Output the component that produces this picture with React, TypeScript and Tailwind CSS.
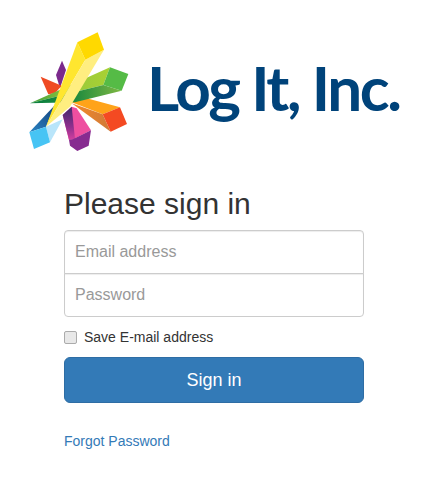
function Logo() {
  return (
    <svg width="120" height="130" viewBox="0 0 360 390" className="shrink-0" aria-hidden="true">
      <defs>
        <linearGradient id="green-top" x1="0" y1="0" x2="1" y2="0">
          <stop offset="0" stopColor="#3f9e3c" />
          <stop offset="0.5" stopColor="#98c93c" />
          <stop offset="1" stopColor="#a9d133" />
        </linearGradient>
        <linearGradient id="green-low" x1="0" y1="0" x2="1" y2="0">
          <stop offset="0" stopColor="#0a7f3f" />
          <stop offset="0.5" stopColor="#1f8b3e" />
          <stop offset="1" stopColor="#7fb843" />
        </linearGradient>
        <linearGradient id="orange-low" x1="0" y1="0" x2="1" y2="0">
          <stop offset="0" stopColor="#f58a26" />
          <stop offset="1" stopColor="#cf7a3a" />
        </linearGradient>
        <linearGradient id="pink-side" x1="0" y1="0" x2="0" y2="1">
          <stop offset="0" stopColor="#3f2a6a" />
          <stop offset="0.6" stopColor="#8e2f8e" />
          <stop offset="1" stopColor="#d23f9f" />
        </linearGradient>
        <linearGradient id="blue-dark" x1="1" y1="0" x2="0" y2="1">
          <stop offset="0" stopColor="#123f7a" />
          <stop offset="1" stopColor="#2b86c5" />
        </linearGradient>
      </defs>
      {/* back rays */}
      <polygon points="126,107 138,135 120,190 108,150" fill="#7b2a8c" />
      <polygon points="62,155 125,182 105,205 85,208" fill="#ef4a23" />
      {/* orange */}
      <polygon points="155,232 200,220 300,247 248,268" fill="#ffa319" />
      <polygon points="155,235 248,268 272,320" fill="url(#orange-low)" />
      <polygon points="248,268 300,247 321,297 272,320" fill="#f44a22" />
      {/* green */}
      <polygon points="270,127 250,180 30,235" fill="url(#green-top)" />
      <polygon points="250,180 305,197 165,232 30,235" fill="url(#green-low)" />
      <polygon points="270,127 325,147 305,197 250,180" fill="#55bb46" />
      {/* pink + purple */}
      <polygon points="128,270 155,245 170,250 213,316 160,343 147,345" fill="#ee4fa0" />
      <polygon points="128,270 155,245 165,342 147,345" fill="url(#pink-side)" />
      <polygon points="147,345 160,342 213,316 206,362 172,378 150,362" fill="#872b90" />
      {/* blue */}
      <polygon points="28,322 105,240 78,305" fill="url(#blue-dark)" />
      <polygon points="78,305 128,283 90,352" fill="#b9e5fa" />
      <polygon points="28,322 78,305 90,352 42,372" fill="#47c4f4" />
      {/* yellow */}
      <polygon points="172,52 196,104 78,305" fill="#ffe62f" />
      <polygon points="196,104 252,74 150,245 78,305" fill="#ffee80" />
      <polygon points="172,52 233,22 252,74 196,104" fill="#ffd900" />
    </svg>
  );
}

export default function App() {
  return (
    <div className="min-h-[493px] bg-white font-['Liberation_Sans',sans-serif] text-[14px] text-[#333]">
      <header className="flex items-start pl-[20px] pt-[25px]">
        <Logo />
        <div className="mt-[27px] ml-[7px] font-['Lato',sans-serif] text-[62px] leading-[70px] font-bold tracking-[-2.4px] whitespace-nowrap text-[#00437a]">
          Log It, Inc.
        </div>
      </header>

      <form className="mx-[64px] mt-[32px] w-[300px]">
        <h2 className="mb-[10px] text-[30px] leading-[33px] font-normal">Please sign in</h2>
        <input
          type="email"
          placeholder="Email address"
          className="block h-[44px] w-full rounded-t-[4px] border border-[#ccc] px-[10px] text-[16px] placeholder:text-[#999] shadow-[inset_0_1px_1px_rgba(0,0,0,0.075)]"
        />
        <input
          type="password"
          placeholder="Password"
          className="-mt-px block h-[44px] w-full rounded-b-[4px] border border-[#ccc] px-[10px] text-[16px] placeholder:text-[#999] shadow-[inset_0_1px_1px_rgba(0,0,0,0.075)]"
        />
        <label className="mt-[10px] flex h-[20px] items-center">
          <input
            type="checkbox"
            className="m-0 h-[13px] w-[13px] appearance-none rounded-[2px] border border-[#ababab] bg-[#e8e8e8]"
          />
          <span className="ml-[7px]">Save E-mail address</span>
        </label>
        <button
          type="button"
          className="mt-[10px] block h-[46px] w-full rounded-[6px] border border-[#2e6da4] bg-[#337ab7] text-[18px] text-white"
        >
          Sign in
        </button>
        <a href="#" className="mt-[28px] block leading-[20px] text-[#337ab7]">
          Forgot Password
        </a>
      </form>
    </div>
  );
}
